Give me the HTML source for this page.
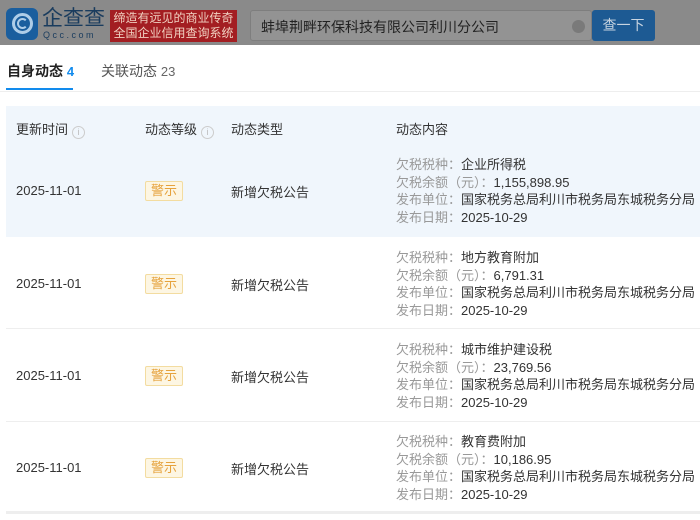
<!DOCTYPE html><html><head><meta charset="utf-8"><style>
*{margin:0;padding:0;box-sizing:border-box}
body{width:700px;height:520px;overflow:hidden;background:#fff;font-family:"Liberation Sans","Noto Sans CJK SC",sans-serif;color:#333;position:relative}
.hd{position:absolute;left:0;top:0;width:700px;height:45px;background:#8a8a8a}
.abs{position:absolute}
.lbl{color:#999}
.row{position:absolute;left:6px;width:694px;height:92px;border-bottom:1px solid #eee}
.t{position:absolute;font-size:13px;white-space:nowrap}
.tag{position:absolute;left:139px;width:38px;height:20px;border:1px solid #f3dca0;background:#fdf6e3;color:#e6a23c;font-size:13px;line-height:18px;text-align:center;border-radius:2px}
.c{position:absolute;left:390px;font-size:13px;line-height:17.5px;white-space:nowrap;color:#333}
.ic{display:inline-block;width:13px;height:13px;border:1px solid #ccc;border-radius:50%;font-size:9px;line-height:11px;text-align:center;color:#bbb;vertical-align:-1px;margin-left:4px}
</style></head><body>
<div class="hd">
 <div class="abs" style="left:6px;top:8px;width:32px;height:32px;background:#1a5e9e;border-radius:6px"></div>
 <div class="abs" style="left:12px;top:13px;width:21px;height:21px;border:3px solid #aecde8;border-radius:50%"></div>
 <div class="abs" style="left:17px;top:18px;width:11px;height:11px;border:2px solid #aecde8;border-radius:50%;border-right-color:transparent"></div>
 <div class="abs" style="left:42px;top:7px;font-size:21px;color:#1a3c5e;letter-spacing:0px;line-height:24px">企查查</div>
 <div class="abs" style="left:43px;top:30px;font-size:9px;color:#1a3c5e;letter-spacing:2.5px">Qcc.com</div>
 <div class="abs" style="left:110px;top:10px;width:127px;height:32px;background:#a31e22;color:#f0d0c0;font-size:12px;line-height:15px;text-align:center;padding-top:1px">缔造有远见的商业传奇<br>全国企业信用查询系统</div>
 <div class="abs" style="left:250px;top:10px;width:342px;height:31px;background:#939393;border:1px solid #7e7e7e;border-radius:3px"></div>
 <div class="abs" style="left:261px;top:17px;font-size:14px;color:#222">蚌埠荆畔环保科技有限公司利川分公司</div>
 <div class="abs" style="left:572px;top:20px;width:13px;height:13px;border-radius:50%;background:#7a7a7a"></div>
 <div class="abs" style="left:592px;top:10px;width:63px;height:31px;background:#1d5a93;border-radius:3px;color:#c8d4e0;font-size:14px;line-height:31px;text-align:center">查一下</div>
</div>
<div class="abs" style="left:7px;top:61px;font-size:14px;color:#222;font-weight:bold">自身动态 <span style="color:#128bed;font-size:13px">4</span></div>
<div class="abs" style="left:101px;top:61px;font-size:14px;color:#555">关联动态 <span style="font-size:13px;color:#666">23</span></div>
<div class="abs" style="left:6px;top:88px;width:67px;height:2px;background:#128bed"></div>
<div class="abs" style="left:0;top:91px;width:700px;height:1px;background:#eee"></div>
<div class="abs" style="left:6px;top:106px;width:694px;height:131px;background:#f0f6fc"></div>
<div class="t" style="left:16px;top:119px;color:#333">更新时间<span class="ic">i</span></div>
<div class="t" style="left:145px;top:119px;color:#333">动态等级<span class="ic">i</span></div>
<div class="t" style="left:231px;top:119px;color:#333">动态类型</div>
<div class="t" style="left:396px;top:119px;color:#333">动态内容</div>

<div class="row" style="top:145px;border:none"></div>
<div class="row" style="top:237px"></div>
<div class="row" style="top:330px"></div>
<div class="row" style="top:422px;border-bottom:3px solid #eee"></div>

<div class="t" style="left:16px;top:183px">2025-11-01</div><div class="tag" style="top:181px;left:145px">警示</div><div class="t" style="left:231px;top:182px">新增欠税公告</div>
<div class="c" style="top:156px;left:396px"><span class="lbl">欠税税种：</span>企业所得税<br><span class="lbl">欠税余额（元）：</span>1,155,898.95<br><span class="lbl">发布单位：</span>国家税务总局利川市税务局东城税务分局<br><span class="lbl">发布日期：</span>2025-10-29</div>

<div class="t" style="left:16px;top:276px">2025-11-01</div><div class="tag" style="top:274px;left:145px">警示</div><div class="t" style="left:231px;top:275px">新增欠税公告</div>
<div class="c" style="top:249px;left:396px"><span class="lbl">欠税税种：</span>地方教育附加<br><span class="lbl">欠税余额（元）：</span>6,791.31<br><span class="lbl">发布单位：</span>国家税务总局利川市税务局东城税务分局<br><span class="lbl">发布日期：</span>2025-10-29</div>

<div class="t" style="left:16px;top:368px">2025-11-01</div><div class="tag" style="top:366px;left:145px">警示</div><div class="t" style="left:231px;top:367px">新增欠税公告</div>
<div class="c" style="top:341px;left:396px"><span class="lbl">欠税税种：</span>城市维护建设税<br><span class="lbl">欠税余额（元）：</span>23,769.56<br><span class="lbl">发布单位：</span>国家税务总局利川市税务局东城税务分局<br><span class="lbl">发布日期：</span>2025-10-29</div>

<div class="t" style="left:16px;top:460px">2025-11-01</div><div class="tag" style="top:458px;left:145px">警示</div><div class="t" style="left:231px;top:459px">新增欠税公告</div>
<div class="c" style="top:433px;left:396px"><span class="lbl">欠税税种：</span>教育费附加<br><span class="lbl">欠税余额（元）：</span>10,186.95<br><span class="lbl">发布单位：</span>国家税务总局利川市税务局东城税务分局<br><span class="lbl">发布日期：</span>2025-10-29</div>
</body></html>
